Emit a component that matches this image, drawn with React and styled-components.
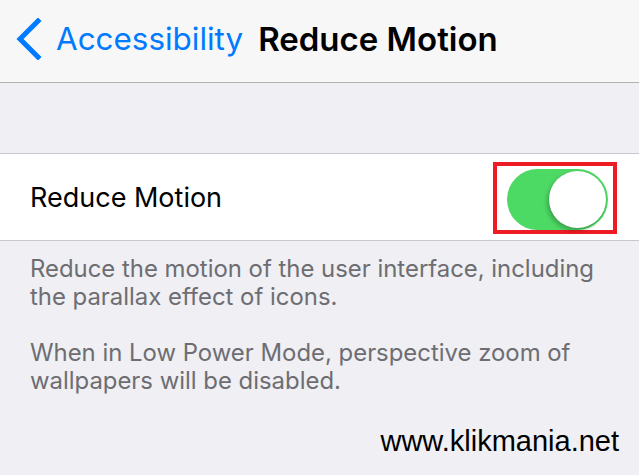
import React from 'react';
import styled, { createGlobalStyle } from 'styled-components';

const GlobalStyle = createGlobalStyle`
  html, body {
    margin: 0;
    padding: 0;
    background: #efeff4;
    font-family: Inter, Roboto, "Noto Sans", sans-serif;
  }
`;

const Page = styled.div`
  width: 639px;
  height: 475px;
  display: flex;
  flex-direction: column;
  background: #efeff4;
  overflow: hidden;
`;

const NavBar = styled.div`
  height: 82px;
  display: flex;
  align-items: center;
  padding: 0 0 4px 15px;
  background: #f7f7f7;
  border-bottom: 1px solid #b2b2b2;
  box-sizing: border-box;
  height: 83px;
`;

const BackButton = styled.div`
  display: flex;
  align-items: center;
  gap: 14px;
  color: #007aff;
  font-size: 31.4px;
  margin-right: 15px;
`;

const NavTitle = styled.div`
  font-size: 33px;
  font-weight: 600;
  color: #000;
`;

const GroupGap = styled.div`
  height: 70px;
`;

const Cell = styled.div`
  height: 86px;
  display: flex;
  align-items: center;
  justify-content: space-between;
  padding: 0 22px 0 30px;
  background: #fff;
  border-top: 1px solid #c8c7cc;
  border-bottom: 1px solid #c8c7cc;
`;

const CellLabel = styled.div`
  font-size: 27px;
  color: #000;
`;

const Highlight = styled.div`
  width: 124px;
  height: 72px;
  box-sizing: border-box;
  border: 4px solid #ed1c24;
  display: flex;
  align-items: center;
  padding: 3px 5px 0 10px;
  margin-top: 2px;
`;

const Switch = styled.div`
  position: relative;
  width: 101px;
  height: 61px;
  border-radius: 31px;
  background: ${p => (p.on ? '#4cd964' : '#e5e5ea')};
`;

const Knob = styled.div`
  position: absolute;
  top: 2px;
  left: ${p => (p.on ? '42px' : '2px')};
  width: 57px;
  height: 57px;
  border-radius: 50%;
  background: #fff;
  box-shadow: -2px 3px 4px rgba(0, 0, 0, 0.22), 0 0 1px rgba(0, 0, 0, 0.25);
`;

const Footer = styled.div`
  padding: 14px 30px 0 30px;
  color: #6d6d72;
  font-size: 23.9px;
  line-height: 28px;

  p {
    margin: 0 0 28px;
  }
`;

const Watermark = styled.div`
  margin-top: auto;
  padding: 0 20px 17px 0;
  text-align: right;
  font-family: "Liberation Sans", Arial, sans-serif;
  font-size: 29px;
  color: #000;
`;

function Chevron() {
  return (
    <svg width="27" height="42" viewBox="0 0 27 42">
      <path d="M23 3 L5 21 L23 39" fill="none" stroke="#007aff" strokeWidth="5" strokeLinecap="square" />
    </svg>
  );
}

export default function App() {
  const on = true;
  return (
    <Page>
      <GlobalStyle />
      <NavBar>
        <BackButton>
          <Chevron />
          <span>Accessibility</span>
        </BackButton>
        <NavTitle>Reduce Motion</NavTitle>
      </NavBar>
      <GroupGap />
      <Cell>
        <CellLabel>Reduce Motion</CellLabel>
        <Highlight>
          <Switch on={on}>
            <Knob on={on} />
          </Switch>
        </Highlight>
      </Cell>
      <Footer>
        <p>Reduce the motion of the user interface, including the parallax effect of icons.</p>
        <p>When in Low Power Mode, perspective zoom of wallpapers will be disabled.</p>
      </Footer>
      <Watermark>www.klikmania.net</Watermark>
    </Page>
  );
}
